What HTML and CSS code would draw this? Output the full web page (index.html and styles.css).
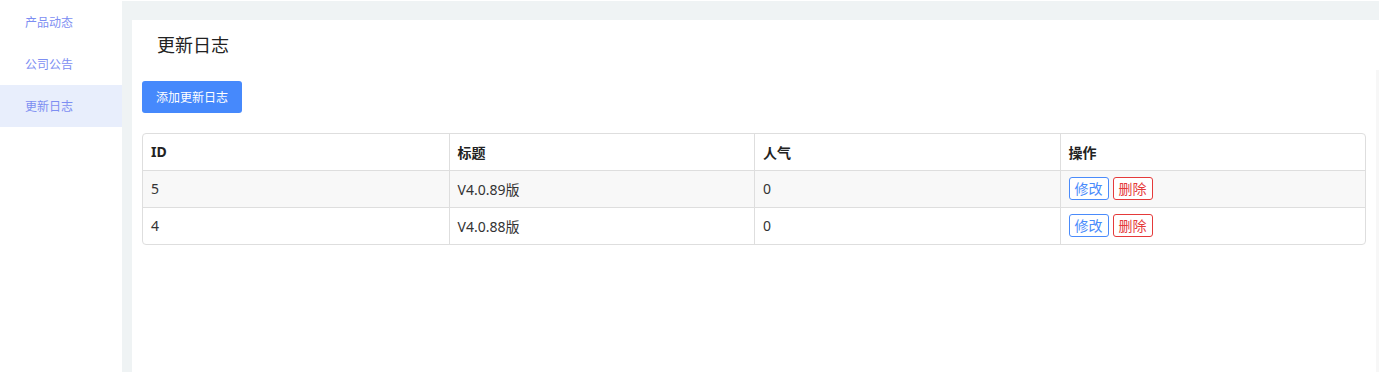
FILE: index.html
```html
<!DOCTYPE html>
<html lang="zh-CN">
<head>
  <meta charset="UTF-8">
  <title>更新日志</title>
  <link rel="stylesheet" href="styles.css">
</head>
<body>
  <div class="layout">
    <nav class="sidebar">
      <a class="nav-item">产品动态</a>
      <a class="nav-item">公司公告</a>
      <a class="nav-item active">更新日志</a>
    </nav>
    <main class="main">
      <div class="panel">
        <h2 class="panel-title">更新日志</h2>
        <button class="btn-primary">添加更新日志</button>
        <table class="grid">
          <thead>
            <tr><th>ID</th><th>标题</th><th>人气</th><th>操作</th></tr>
          </thead>
          <tbody>
            <tr class="odd"><td>5</td><td>V4.0.89版</td><td>0</td><td><span class="btn-edit">修改</span><span class="btn-del">删除</span></td></tr>
            <tr><td>4</td><td>V4.0.88版</td><td>0</td><td><span class="btn-edit">修改</span><span class="btn-del">删除</span></td></tr>
          </tbody>
        </table>
      </div>
      <div class="scroll-track"></div>
    </main>
  </div>
</body>
</html>
```

FILE: styles.css
```css
html, body {
  margin: 0;
  padding: 0;
  height: 100%;
  background-color: #ffffff;
  font-family: "Noto Sans", "Noto Sans CJK SC", sans-serif;
  color: #333;
}
.layout {
  display: flex;
  height: 100%;
}
.sidebar {
  width: 122px;
  flex-shrink: 0;
  background-color: #ffffff;
  padding-top: 1px;
}
.nav-item {
  display: block;
  height: 41px;
  line-height: 41px;
  padding-top: 1px;
  padding-left: 25px;
  font-size: 12px;
  color: #7d8ef2;
}
.nav-item.active {
  background-color: #e8eefc;
}
.main {
  flex: 1;
  background-color: #eff3f4;
  margin-top: 1px;
  padding: 19px 0 0 10px;
  display: flex;
  position: relative;
}
.panel {
  flex: 1;
  background-color: #ffffff;
  padding: 0 13px 0 10px;
}
.panel-title {
  margin: 0;
  height: 50px;
  line-height: 50px;
  padding-left: 15px;
  font-size: 18px;
  font-weight: normal;
  color: #222;
}
.btn-primary {
  display: block;
  margin-top: 11px;
  width: 100px;
  height: 32px;
  border: none;
  border-radius: 3px;
  background-color: #4689fc;
  color: white;
  font-family: inherit;
  font-size: 12px;
  padding: 0;
}
.grid {
  margin-top: 20px;
  width: 100%;
  table-layout: fixed;
  border-collapse: separate;
  border-spacing: 0;
  border: 1px solid #dedede;
  border-radius: 4px;
  overflow: hidden;
}
.grid th, .grid td {
  height: 35px;
  padding: 0 8px 1px;
  text-align: left;
  border-left: 1px solid #dedede;
  font-size: 14px;
  color: #333;
}
.grid th:first-child, .grid td:first-child {
  border-left: none;
}
.grid th {
  font-weight: bold;
  color: #222;
}
.grid td {
  border-top: 1px solid #dedede;
}
.grid tr.odd td {
  background-color: #f8f8f8;
}
.btn-edit, .btn-del {
  display: inline-block;
  height: 21px;
  line-height: 21px;
  padding: 0 5px;
  border-radius: 3px;
  font-size: 14px;
  margin-right: 4px;
  background-color: #ffffff;
}
.btn-edit {
  border: 1px solid #4a8bfb;
  color: #4a8bfb;
}
.btn-del {
  border: 1px solid #e53a3a;
  color: #e53a3a;
}
.scroll-track {
  position: absolute;
  right: 0;
  top: 69px;
  bottom: 0;
  width: 3px;
  background-color: #f7f7f7;
}
```
